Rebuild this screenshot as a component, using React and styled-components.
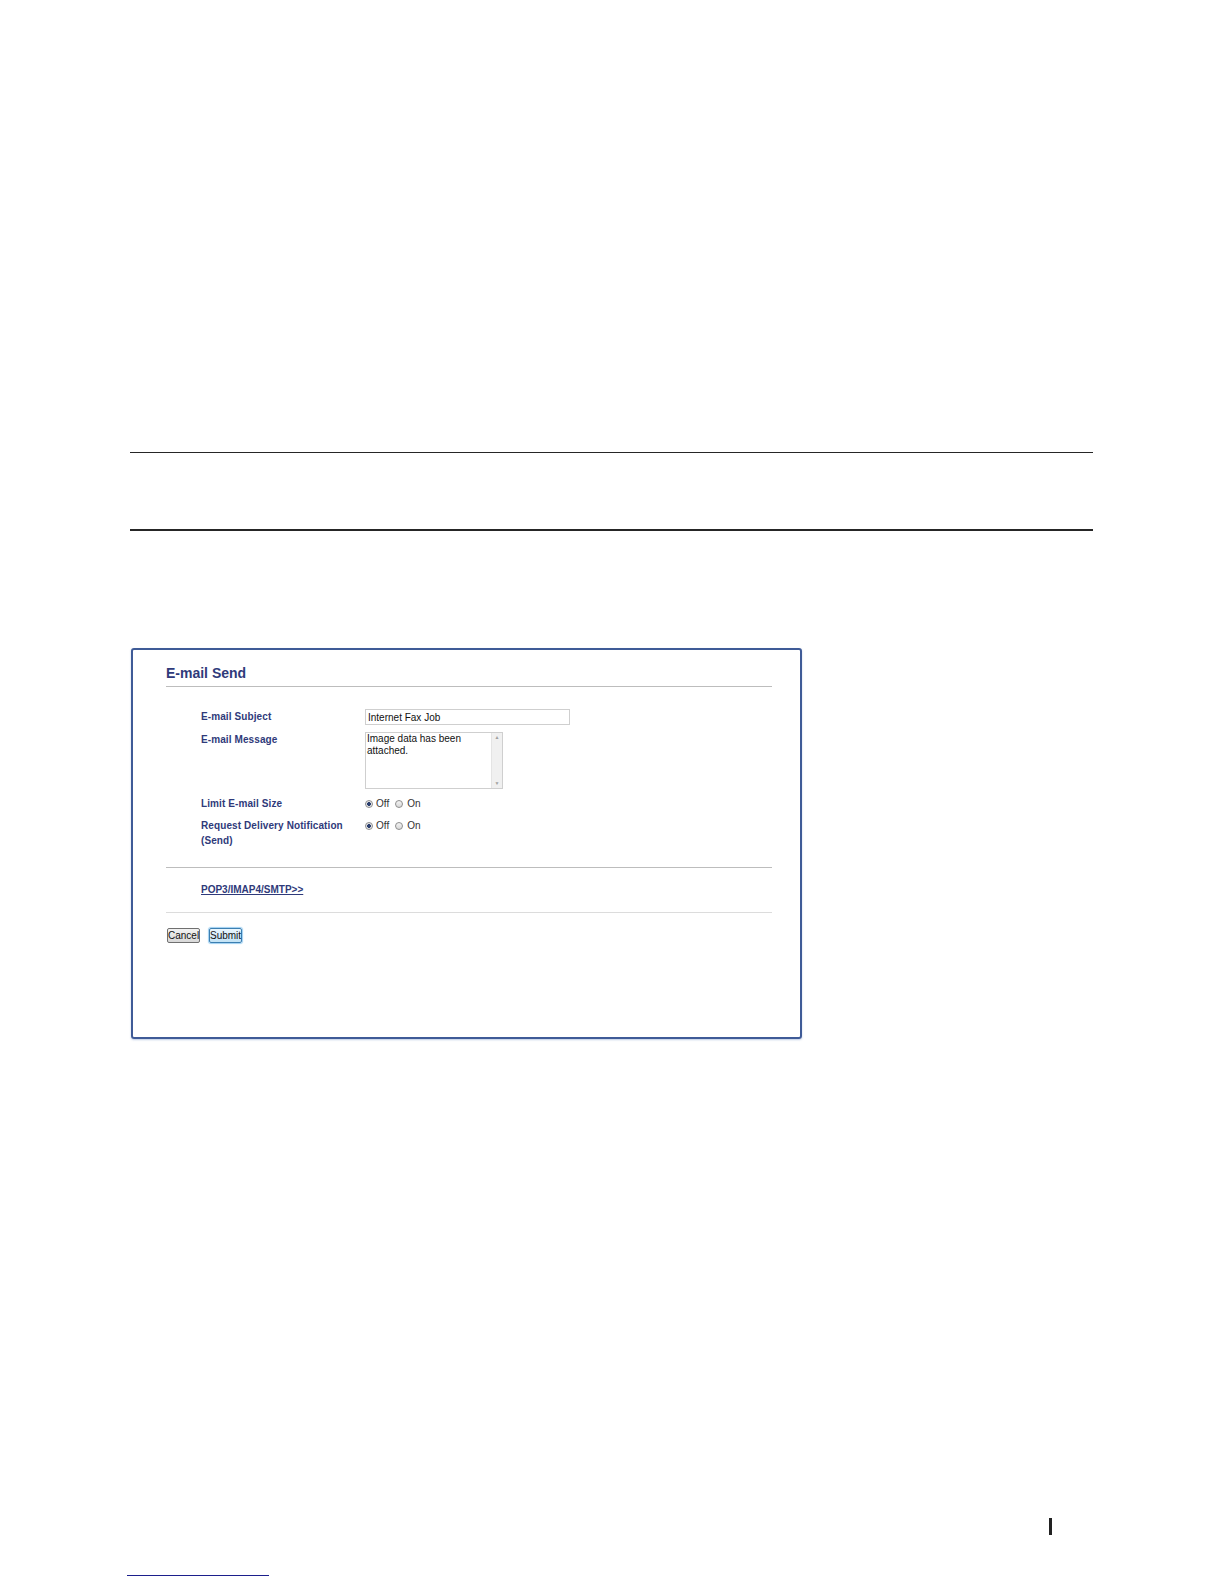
import React from 'react';
import styled, { createGlobalStyle } from 'styled-components';

const GlobalStyle = createGlobalStyle`
    body {
        margin: 0;
        background: #ffffff;
        font-family: "Liberation Sans", Arial, sans-serif;
    }
`

const Page = styled.div`
    width: 1224px;
    height: 1584px;
    box-sizing: border-box;
    padding-top: 452px;
    display: flex;
    flex-direction: column;
    overflow: hidden;
`

const Rule = styled.div`
    margin-left: 130px;
    width: 963px;
    height: ${props => props.thick ? '2px' : '1px'};
    margin-top: ${props => props.gap || 0}px;
    background-color: #262626;
`

const Panel = styled.div`
    margin-top: 117px;
    margin-left: 131px;
    width: 671px;
    height: 391px;
    box-sizing: border-box;
    border: 2px solid #3f5b97;
    border-radius: 3px;
    box-shadow: 0 1px 2px rgba(70, 110, 180, 0.35);
    padding: 15px 28px 0 33px;
`

const Title = styled.h2`
    margin: 0;
    padding-bottom: 5px;
    border-bottom: 1px solid #bdbdbd;
    font-size: 14px;
    line-height: 16px;
    font-weight: bold;
    color: #2f3a7a;
`

const Section = styled.div`
    padding: ${props => props.pad};
    border-bottom: ${props => props.line ? `1px solid ${props.line}` : 'none'};
`

const FormGrid = styled.div`
    display: grid;
    grid-template-columns: 164px 1fr;
    row-gap: 7px;
    padding-left: 35px;
`

const Label = styled.div`
    font-size: 10px;
    line-height: 15px;
    font-weight: bold;
    letter-spacing: 0.1px;
    color: #2f3a7a;
`

const TextField = styled.input`
    display: block;
    width: 205px;
    height: 16px;
    box-sizing: border-box;
    border: 1px solid #cfcfcf;
    padding: 0 2px;
    margin: 0;
    font-family: "Liberation Sans", Arial, sans-serif;
    font-size: 10px;
    color: #111;
    outline: none;
`

const MessageBox = styled.div`
    width: 138px;
    height: 57px;
    box-sizing: border-box;
    border: 1px solid #cfcfcf;
    display: flex;
`

const MessageText = styled.div`
    flex: 1;
    padding: 0 1px;
    font-size: 10px;
    line-height: 11.5px;
    color: #111;
`

const ScrollTrack = styled.div`
    width: 10px;
    background-color: #f0f0f0;
    border-left: 1px solid #e4e4e4;
    display: flex;
    flex-direction: column;
    justify-content: space-between;
    align-items: center;
    font-size: 5px;
    line-height: 9px;
    color: #a0a0a0;
`

const RadioGroup = styled.div`
    display: flex;
    align-items: center;
    height: 15px;
    font-size: 10px;
    color: #333;
`

const RadioDot = styled.span`
    width: 8px;
    height: 8px;
    box-sizing: border-box;
    border-radius: 50%;
    border: 1px solid #8e8e8e;
    background: ${props => props.checked
        ? 'radial-gradient(circle, #2b3f6e 0, #2b3f6e 1.6px, #e8e8e8 2.2px)'
        : 'linear-gradient(#f4f4f4, #d8d8d8)'};
    margin-right: ${props => props.checked ? 3 : 4}px;
`

const RadioText = styled.span`
    margin-right: 6px;
`

const Link = styled.a`
    display: block;
    margin-left: 35px;
    font-size: 10px;
    line-height: 15px;
    font-weight: bold;
    color: #2f3a7a;
    text-decoration: underline;
`

const ButtonRow = styled.div`
    display: flex;
    gap: 9px;
    padding: 15px 0 0 1px;
`

const Button = styled.button`
    width: 33px;
    height: 15px;
    padding: 0;
    margin: 0;
    font-family: "Liberation Sans", Arial, sans-serif;
    font-size: 10px;
    line-height: 13px;
    color: #111;
    border-radius: 2px;
    border: 1px solid ${props => props.primary ? '#3c7fb1' : '#707070'};
    background: ${props => props.primary
        ? 'linear-gradient(#eaf6fd, #c2e2f5)'
        : 'linear-gradient(#f2f2f2, #d8d8d8)'};
    box-shadow: ${props => props.primary ? '0 0 1px 1px #9fd0f2' : 'none'};
`

const PageMark = styled.div`
    margin-top: 479px;
    margin-left: 1049px;
    width: 3px;
    height: 17px;
    background-color: #222;
`

const FootLine = styled.div`
    margin-top: 40px;
    margin-left: 127px;
    width: 142px;
    height: 1px;
    background-color: #1c1f8c;
`

const Radios = () => (
    <RadioGroup>
        <RadioDot checked />
        <RadioText>Off</RadioText>
        <RadioDot />
        <RadioText>On</RadioText>
    </RadioGroup>
)

const App = () => (
    <Page>
        <GlobalStyle />
        <Rule />
        <Rule thick gap={76} />
        <Panel>
            <Title>E-mail Send</Title>
            <Section pad="22px 0 19px" line="#bdbdbd">
                <FormGrid>
                    <Label>E-mail Subject</Label>
                    <TextField readOnly value="Internet Fax Job" />
                    <Label>E-mail Message</Label>
                    <MessageBox>
                        <MessageText>Image data has been attached.</MessageText>
                        <ScrollTrack>
                            <span>▲</span>
                            <span>▼</span>
                        </ScrollTrack>
                    </MessageBox>
                    <Label>Limit E-mail Size</Label>
                    <Radios />
                    <Label>Request Delivery Notification (Send)</Label>
                    <Radios />
                </FormGrid>
            </Section>
            <Section pad="14px 0 15px" line="#dcdcdc">
                <Link href="#">POP3/IMAP4/SMTP&gt;&gt;</Link>
            </Section>
            <ButtonRow>
                <Button>Cancel</Button>
                <Button primary>Submit</Button>
            </ButtonRow>
        </Panel>
        <PageMark />
        <FootLine />
    </Page>
)

export default App;
